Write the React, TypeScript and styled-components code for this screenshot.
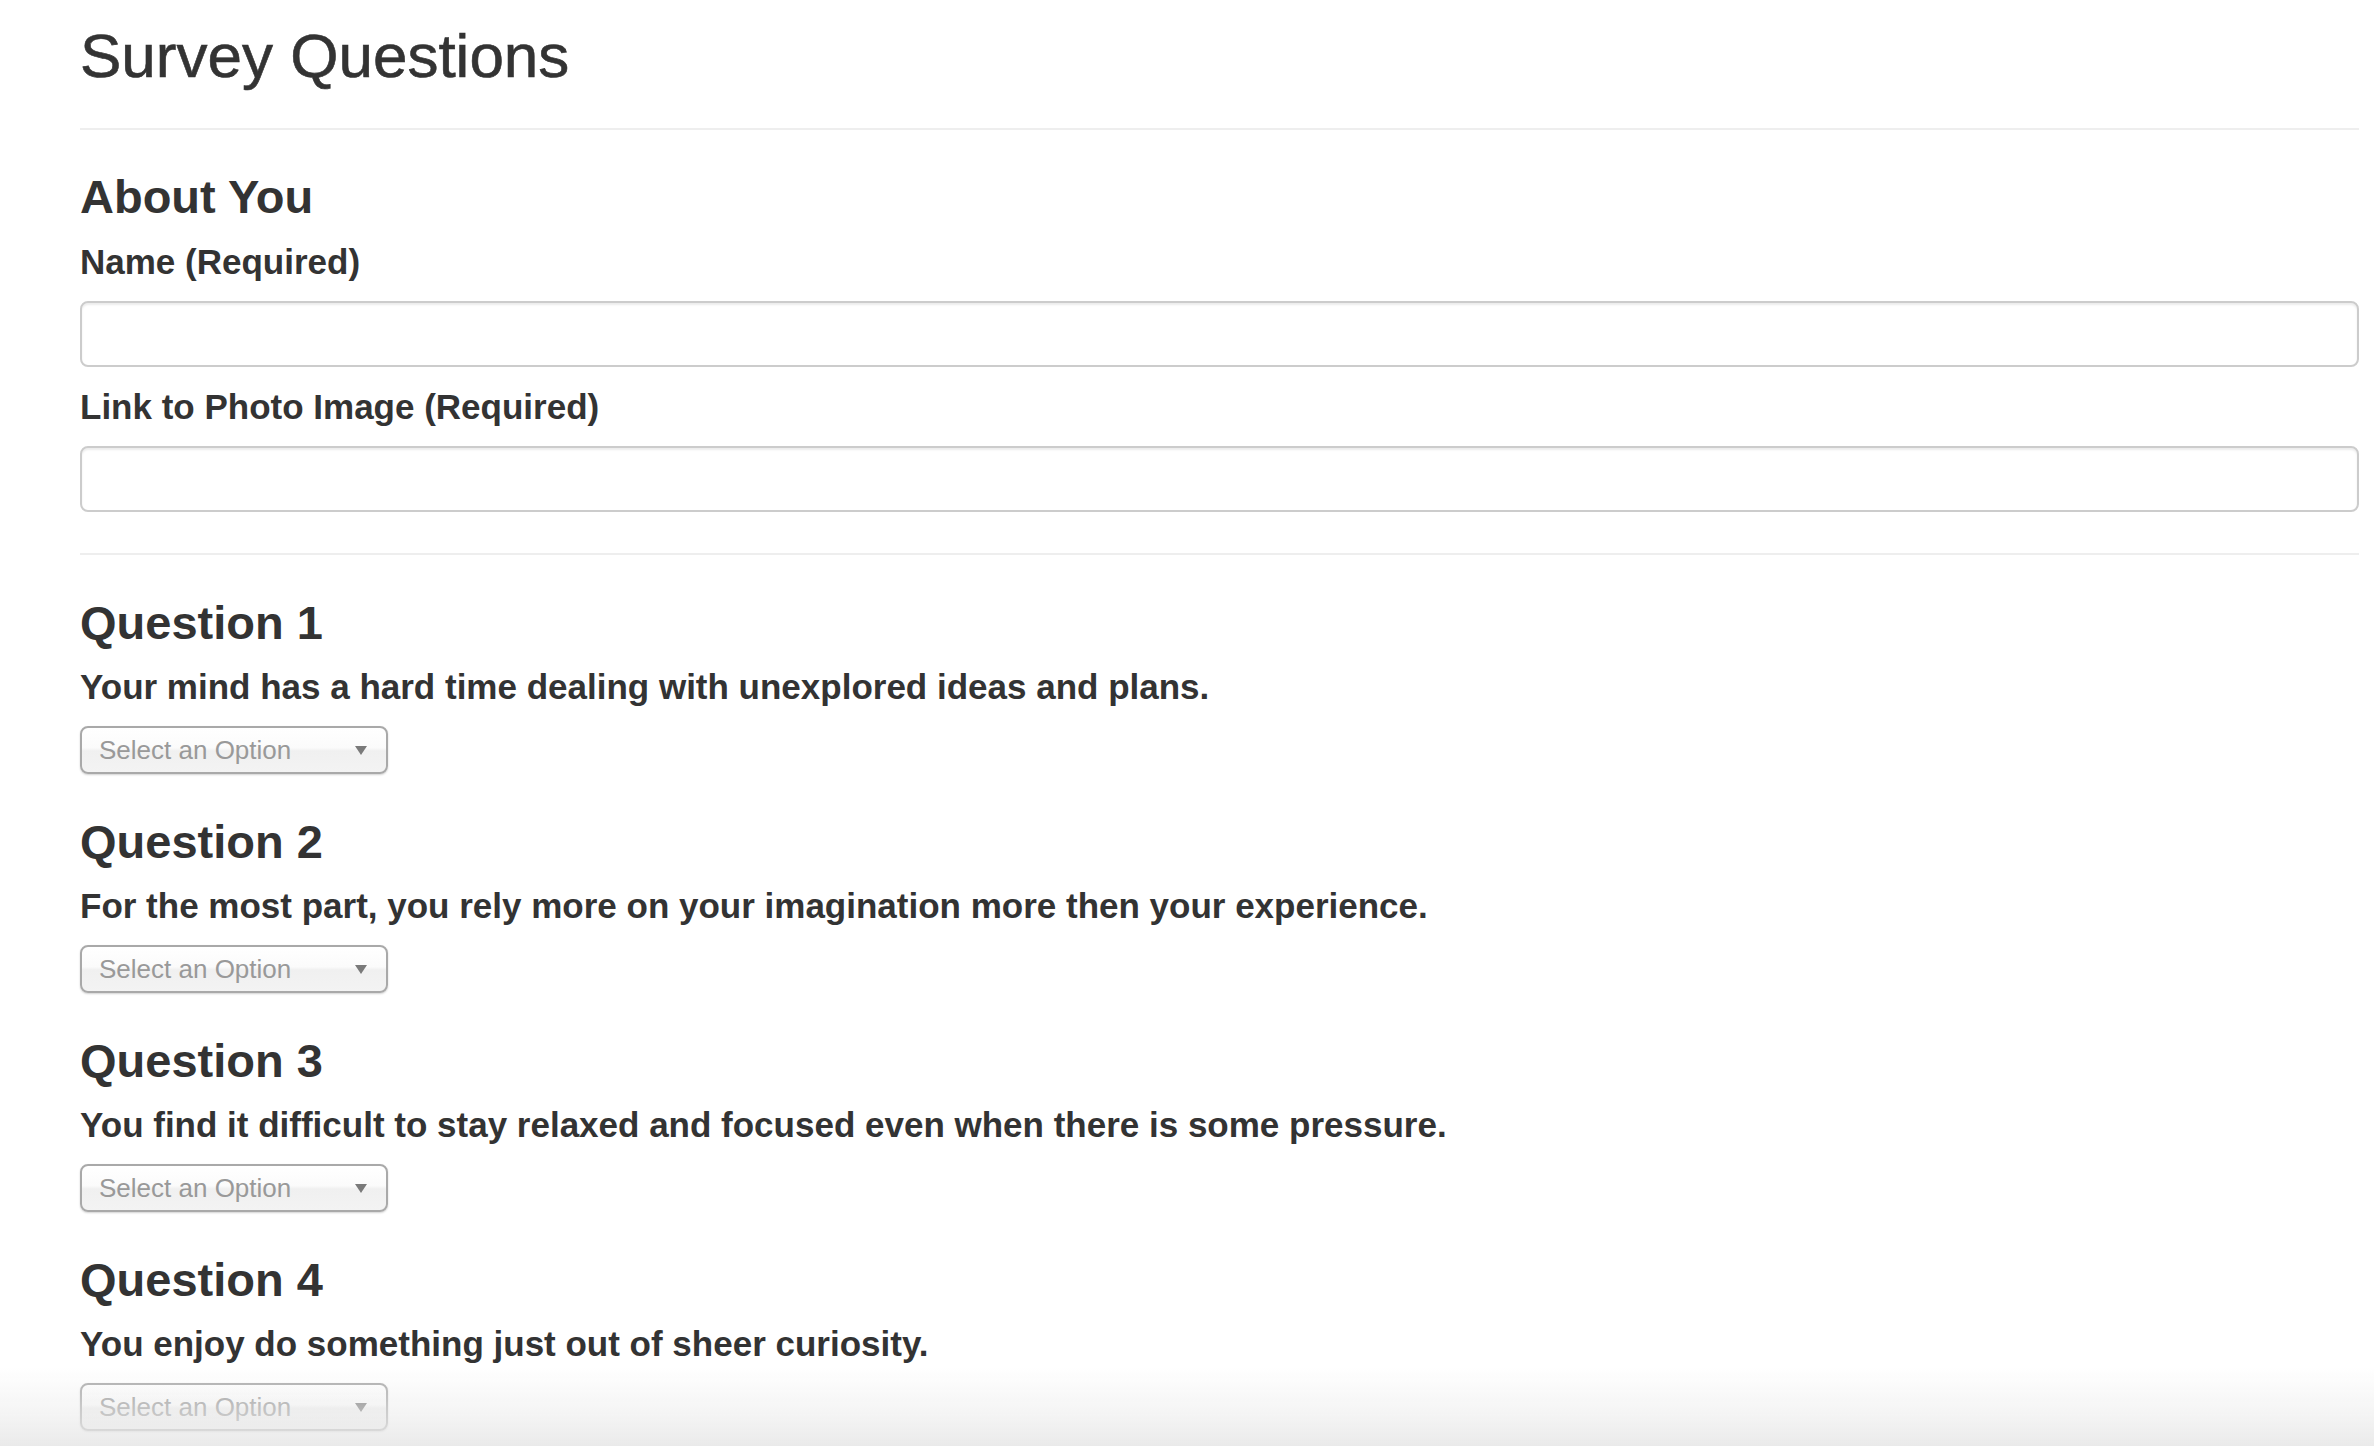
import React from "react";
import styled, { createGlobalStyle } from "styled-components";

const GlobalStyle = createGlobalStyle`
  html, body {
    margin: 0;
    padding: 0;
    background: #ffffff;
  }
  body {
    font-family: "Liberation Sans", Arial, Helvetica, sans-serif;
    color: #333333;
  }
  * { box-sizing: border-box; }
`;

const Page = styled.main`
  padding: 21px 15px 40px 80px;
`;

const Title = styled.h1`
  margin: 0;
  font-size: 62px;
  line-height: 70px;
  font-weight: 400;
  color: #333333;
  -webkit-text-stroke: 0.6px #333333;
`;

const Divider = styled.hr<{ $top: number }>`
  margin: ${(p) => p.$top}px 0 0;
  border: 0;
  border-top: 2px solid #eeeeee;
  height: 0;
`;

const Section = styled.section<{ $top: number }>`
  display: flex;
  flex-direction: column;
  margin-top: ${(p) => p.$top}px;
`;

const SectionTitle = styled.h3`
  margin: 0;
  font-size: 47px;
  line-height: 56px;
  font-weight: 700;
  color: #333333;
`;

const Field = styled.div<{ $top: number }>`
  display: flex;
  flex-direction: column;
  gap: 19px;
  margin-top: ${(p) => p.$top}px;
`;

const Label = styled.label`
  display: block;
  font-size: 35px;
  line-height: 40px;
  font-weight: 700;
  color: #333333;
`;

const TextInput = styled.input`
  display: block;
  width: 100%;
  height: 66px;
  padding: 12px 24px;
  font-size: 28px;
  font-family: inherit;
  color: #555555;
  background: #ffffff;
  border: 2px solid #cccccc;
  border-radius: 8px;
  box-shadow: inset 0 2px 2px rgba(0, 0, 0, 0.075);
  outline: none;
`;

const Question = styled.div`
  display: flex;
  flex-direction: column;
  margin-top: 40px;
`;

const QuestionText = styled.p`
  margin: 16px 0 0;
  font-size: 35px;
  line-height: 40px;
  font-weight: 700;
  color: #333333;
`;

const SelectWrap = styled.div`
  position: relative;
  width: 308px;
  height: 48px;
  margin-top: 19px;

  &::after {
    content: "";
    position: absolute;
    right: 21px;
    top: 20px;
    width: 0;
    height: 0;
    border-left: 6px solid transparent;
    border-right: 6px solid transparent;
    border-top: 9px solid #7a7a7a;
    pointer-events: none;
  }
`;

const Select = styled.select`
  appearance: none;
  -webkit-appearance: none;
  display: block;
  width: 100%;
  height: 100%;
  padding: 0 40px 0 17px;
  font-family: "Liberation Sans", Arial, Helvetica, sans-serif;
  font-size: 26px;
  color: #999999;
  border: 2px solid #a9a9a9;
  border-radius: 8px;
  background: linear-gradient(
    to bottom,
    #ffffff 0%,
    #fbfbfb 45%,
    #f0f0f0 52%,
    #f3f3f3 100%
  );
  box-shadow: 0 1px 2px rgba(0, 0, 0, 0.18);
  outline: none;
`;

const BottomFade = styled.div`
  position: fixed;
  left: 0;
  right: 0;
  bottom: 0;
  height: 80px;
  pointer-events: none;
  background: linear-gradient(
    to bottom,
    rgba(236, 236, 236, 0) 0%,
    rgba(236, 236, 236, 0.55) 60%,
    rgba(232, 232, 232, 0.9) 100%
  );
`;

const questions = [
  "Your mind has a hard time dealing with unexplored ideas and plans.",
  "For the most part, you rely more on your imagination more then your experience.",
  "You find it difficult to stay relaxed and focused even when there is some pressure.",
  "You enjoy do something just out of sheer curiosity.",
];

const options = [
  "Select an Option",
  "1 (Strongly Disagree)",
  "2",
  "3",
  "4",
  "5 (Strongly Agree)",
];

export default function App() {
  return (
    <>
      <GlobalStyle />
      <Page>
        <Title>Survey Questions</Title>
        <Divider $top={37} />
        <Section $top={39}>
          <SectionTitle>About You</SectionTitle>
          <Field $top={17}>
            <Label htmlFor="name">Name (Required)</Label>
            <TextInput id="name" type="text" />
          </Field>
          <Field $top={20}>
            <Label htmlFor="photo">Link to Photo Image (Required)</Label>
            <TextInput id="photo" type="text" />
          </Field>
        </Section>
        <Divider $top={41} />
        {questions.map((q, i) => (
          <Question key={i}>
            <SectionTitle>Question {i + 1}</SectionTitle>
            <QuestionText>{q}</QuestionText>
            <SelectWrap>
              <Select defaultValue="">
                <option value="">{options[0]}</option>
                {options.slice(1).map((o) => (
                  <option key={o} value={o}>
                    {o}
                  </option>
                ))}
              </Select>
            </SelectWrap>
          </Question>
        ))}
      </Page>
      <BottomFade />
    </>
  );
}
